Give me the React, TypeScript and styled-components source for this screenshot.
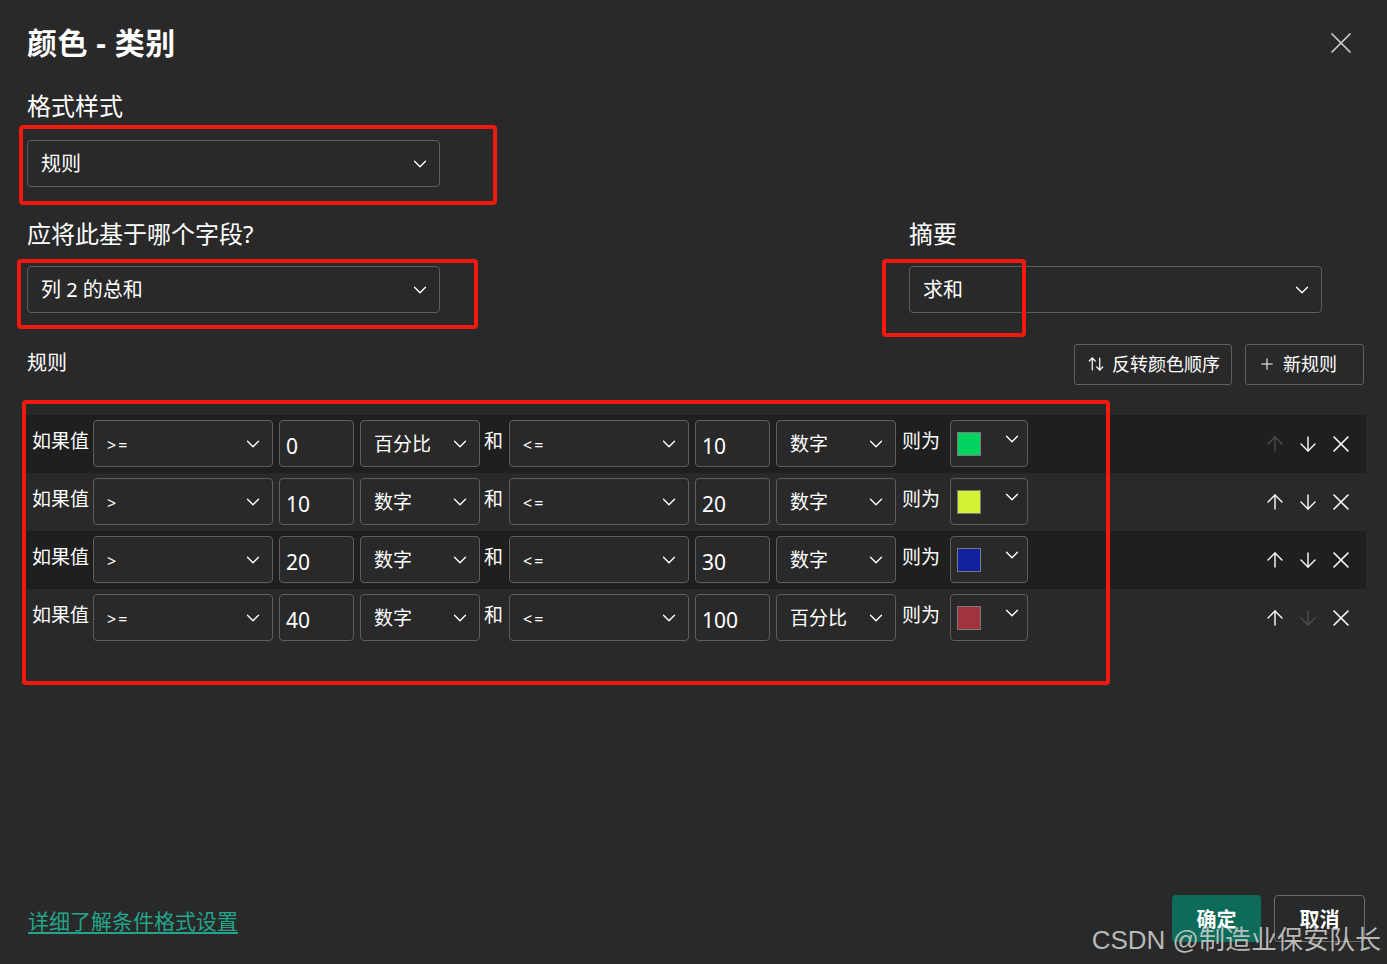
import React from 'react';
import styled, {createGlobalStyle} from "styled-components";
import {ArrowDown, ArrowUp, ArrowUpDown, ChevronDown, Plus, X} from "lucide-react";

const FONT = `"Noto Sans", "Noto Sans CJK SC", sans-serif`;

interface IRule {
    op1: string;
    v1: string;
    u1: string;
    op2: string;
    v2: string;
    u2: string;
    color: string;
    upDisabled?: boolean;
    downDisabled?: boolean;
}

const rules: IRule[] = [
    {op1: ">=", v1: "0", u1: "百分比", op2: "<=", v2: "10", u2: "数字", color: "#00d35e", upDisabled: true},
    {op1: ">", v1: "10", u1: "数字", op2: "<=", v2: "20", u2: "数字", color: "#d3f032"},
    {op1: ">", v1: "20", u1: "数字", op2: "<=", v2: "30", u2: "数字", color: "#1022a0"},
    {op1: ">=", v1: "40", u1: "数字", op2: "<=", v2: "100", u2: "百分比", color: "#a2333e", downDisabled: true},
];

const Chevron: React.FC = () => <ChevronDown size={22} strokeWidth={1.5}/>;

const App: React.FC = () => {
    return (
        <Page>
            <GlobalStyle/>

            <Header>
                <Title>颜色 - 类别</Title>
                <CloseButton><X size={36} strokeWidth={1.1}/></CloseButton>
            </Header>

            <Label $top={27}>格式样式</Label>
            <Marked $w={413} $top={18}>
                <Dropdown>
                    <DropdownText>规则</DropdownText>
                    <Chevron/>
                </Dropdown>
                <RedFrame $l={-8} $t={-15} $w={478} $h={80}/>
            </Marked>

            <FieldGrid>
                <div>
                    <Label $top={0}>应将此基于哪个字段?</Label>
                    <Marked $w={413} $top={16}>
                        <Dropdown>
                            <DropdownText>列 2 的总和</DropdownText>
                            <Chevron/>
                        </Dropdown>
                        <RedFrame $l={-10} $t={-7} $w={461} $h={70}/>
                    </Marked>
                </div>
                <div>
                    <Label $top={0}>摘要</Label>
                    <Marked $w={413} $top={16}>
                        <Dropdown>
                            <DropdownText>求和</DropdownText>
                            <Chevron/>
                        </Dropdown>
                        <RedFrame $l={-27} $t={-7} $w={144} $h={78}/>
                    </Marked>
                </div>
            </FieldGrid>

            <RulesBar>
                <SmallLabel>规则</SmallLabel>
                <BarButtons>
                    <OutlineButton $w={158}>
                        <ArrowUpDown size={18} strokeWidth={1.6}/>
                        反转颜色顺序
                    </OutlineButton>
                    <OutlineButton $w={119}>
                        <Plus size={18} strokeWidth={1.4}/>
                        新规则
                    </OutlineButton>
                </BarButtons>
            </RulesBar>

            <RulesList>
                {rules.map((r, i) => (
                    <RuleRow key={i}>
                        <RowText $shift={0} $after={-2}>如果值</RowText>
                        <Select $w={180}>
                            <OpText>{r.op1}</OpText>
                            <Chevron/>
                        </Select>
                        <ValueInput $w={75}>{r.v1}</ValueInput>
                        <Select $w={120}>
                            <SelectText>{r.u1}</SelectText>
                            <Chevron/>
                        </Select>
                        <RowText $shift={-2} $after={0}>和</RowText>
                        <Select $w={180}>
                            <OpText>{r.op2}</OpText>
                            <Chevron/>
                        </Select>
                        <ValueInput $w={75}>{r.v2}</ValueInput>
                        <Select $w={120}>
                            <SelectText>{r.u2}</SelectText>
                            <Chevron/>
                        </Select>
                        <RowText $shift={0} $after={4}>则为</RowText>
                        <ColorSelect>
                            <Swatch $color={r.color}/>
                            <Chevron/>
                        </ColorSelect>

                        <RowActions>
                            <IconButton $disabled={r.upDisabled}><ArrowUp size={24} strokeWidth={1.4}/></IconButton>
                            <IconButton $disabled={r.downDisabled}><ArrowDown size={24} strokeWidth={1.4}/></IconButton>
                            <IconButton><X size={28} strokeWidth={1.3}/></IconButton>
                        </RowActions>
                    </RuleRow>
                ))}
                <RedFrame $l={-2} $t={-15} $w={1088} $h={285}/>
            </RulesList>

            <Footer>
                <HelpLink href="#">详细了解条件格式设置</HelpLink>
                <FooterButtons>
                    <PrimaryButton>确定</PrimaryButton>
                    <SecondaryButton>取消</SecondaryButton>
                </FooterButtons>
            </Footer>

            <Watermark>CSDN @制造业保安队长</Watermark>
        </Page>
    );
};

export default App;

const GlobalStyle = createGlobalStyle`
    html, body {
      margin: 0;
      padding: 0;
      background: #292929;
    }
    * {
      box-sizing: border-box;
    }
`;

const Page = styled.div`
    position: relative;
    width: 1387px;
    height: 964px;
    overflow: hidden;
    display: flex;
    flex-direction: column;
    padding: 23px 22px 22px 27px;
    background: #292929;
    color: #ffffff;
    font-family: ${FONT};
`;

const Header = styled.div`
    display: flex;
    justify-content: space-between;
    align-items: center;
    height: 40px;
`;

const Title = styled.h1`
    margin: 0;
    font-size: 30px;
    line-height: 40px;
    font-weight: 700;
    letter-spacing: 0.5px;
`;

const CloseButton = styled.div`
    display: flex;
    color: #d0d0d0;
    margin-right: 6px;
`;

const Label = styled.div<{ $top: number }>`
    margin-top: ${p => p.$top}px;
    font-size: 24px;
    line-height: 32px;
`;

const SmallLabel = styled.div`
    font-size: 20px;
    line-height: 28px;
    padding-bottom: 4px;
`;

const Marked = styled.div<{ $w: number; $top: number }>`
    position: relative;
    width: ${p => p.$w}px;
    margin-top: ${p => p.$top}px;
`;

const RedFrame = styled.div<{ $l: number; $t: number; $w: number; $h: number }>`
    position: absolute;
    left: ${p => p.$l}px;
    top: ${p => p.$t}px;
    width: ${p => p.$w}px;
    height: ${p => p.$h}px;
    border: 4px solid #f4190f;
    border-radius: 4px;
    pointer-events: none;
`;

const Dropdown = styled.div`
    display: flex;
    align-items: center;
    justify-content: space-between;
    height: 47px;
    padding: 0 8px 0 13px;
    border: 1px solid #5e5e5e;
    border-radius: 4px;
    background: #292929;
    color: #fff;
`;

const DropdownText = styled.span`
    font-size: 20px;
    line-height: 28px;
`;

const FieldGrid = styled.div`
    display: grid;
    grid-template-columns: 413px 413px;
    column-gap: 469px;
    margin-top: 31px;
`;

const RulesBar = styled.div`
    display: flex;
    justify-content: space-between;
    align-items: center;
    margin-top: 31px;
`;

const BarButtons = styled.div`
    display: flex;
    gap: 13px;
    margin-right: 1px;
`;

const OutlineButton = styled.div<{ $w: number }>`
    display: flex;
    align-items: center;
    gap: 7px;
    width: ${p => p.$w}px;
    height: 41px;
    padding: 0 4px 3px 12px;
    border: 1px solid #606060;
    border-radius: 3px;
    font-size: 18px;
    white-space: nowrap;
    color: #fff;

    svg {
      flex: none;
      margin-top: 2px;
    }
`;

const RulesList = styled.div`
    position: relative;
    margin-top: 30px;
    margin-left: -3px;
    margin-right: -1px;
`;

const RuleRow = styled.div`
    display: flex;
    align-items: center;
    gap: 6px;
    height: 58px;
    padding: 0 9px 1px 8px;

    &:nth-child(odd) {
      background: #1f1f1f;
    }
`;

const RowText = styled.span<{ $shift: number; $after: number }>`
    margin-left: ${p => p.$shift}px;
    margin-right: ${p => p.$after}px;
    font-size: 19px;
    line-height: 26px;
    padding-bottom: 5px;
    white-space: nowrap;
`;

const Select = styled.div<{ $w: number }>`
    display: flex;
    align-items: center;
    justify-content: space-between;
    flex: none;
    width: ${p => p.$w}px;
    height: 47px;
    padding: 0 8px 0 13px;
    border: 1px solid #5e5e5e;
    border-radius: 4px;
    background: #292929;
    color: #fff;
`;

const SelectText = styled.span`
    font-size: 19px;
    line-height: 26px;
`;

const OpText = styled.span`
    font-size: 16px;
    letter-spacing: 2px;
    line-height: 22px;
    padding-top: 3px;
`;

const ValueInput = styled.div<{ $w: number }>`
    display: flex;
    align-items: center;
    flex: none;
    width: ${p => p.$w}px;
    height: 47px;
    padding: 4px 0 0 6px;
    border: 1px solid #5e5e5e;
    border-radius: 4px;
    background: #292929;
    font-size: 21px;
`;

const ColorSelect = styled.div`
    display: flex;
    align-items: center;
    justify-content: space-between;
    flex: none;
    width: 78px;
    height: 47px;
    padding: 0 4px 0 6px;
    border: 1px solid #5e5e5e;
    border-radius: 4px;
    background: #292929;

    svg {
      margin-top: -10px;
    }
`;

const Swatch = styled.div<{ $color: string }>`
    width: 24px;
    height: 24px;
    background: ${p => p.$color};
    border: 1px solid #7a7a7a;
`;

const RowActions = styled.div`
    display: flex;
    align-items: center;
    margin-left: auto;
`;

const IconButton = styled.div<{ $disabled?: boolean }>`
    display: flex;
    justify-content: center;
    width: 33px;
    color: ${p => p.$disabled ? "#4c4c4c" : "#ffffff"};
`;

const Footer = styled.div`
    display: flex;
    justify-content: space-between;
    align-items: center;
    margin-top: auto;
`;

const HelpLink = styled.a`
    margin-left: 1px;
    padding-top: 3px;
    font-size: 21px;
    color: #23a58b;
    text-decoration: underline;
    text-underline-offset: 3px;
`;

const FooterButtons = styled.div`
    display: flex;
    gap: 13px;
`;

const PrimaryButton = styled.div`
    display: flex;
    align-items: center;
    justify-content: center;
    width: 89px;
    height: 47px;
    border-radius: 4px;
    background: #0d6b59;
    font-size: 20px;
    font-weight: 700;
`;

const SecondaryButton = styled(PrimaryButton)`
    width: 91px;
    background: transparent;
    border: 1px solid #6a6a6a;
`;

const Watermark = styled.div`
    position: absolute;
    right: 6px;
    bottom: 8px;
    font-family: "Liberation Sans", "Noto Sans CJK SC", sans-serif;
    font-size: 26px;
    color: rgba(205, 205, 205, 0.88);
    pointer-events: none;
    white-space: nowrap;
`;
